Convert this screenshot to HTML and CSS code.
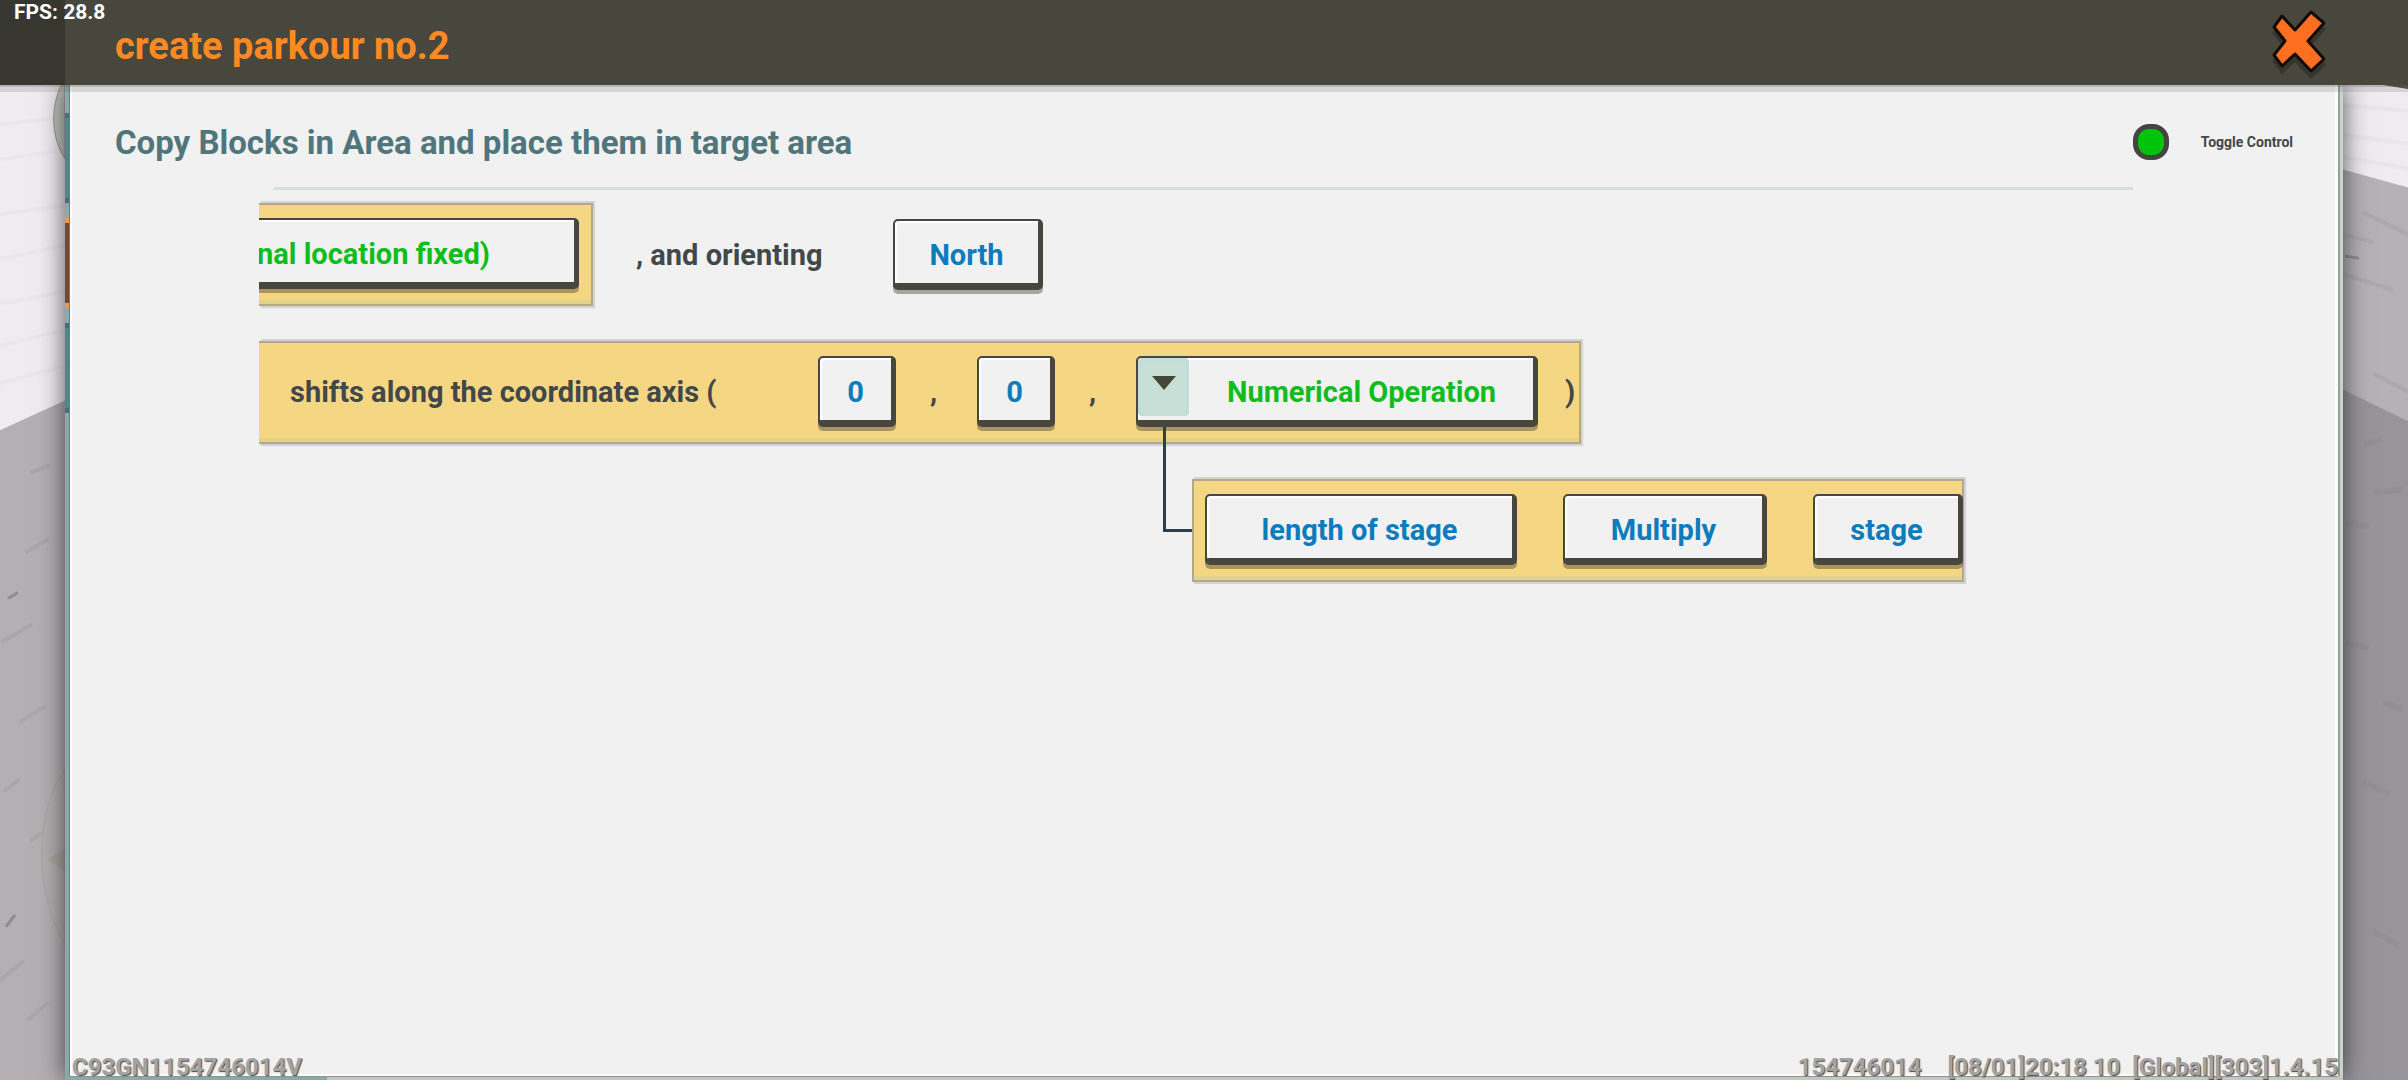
FILE: index.html
```
<!DOCTYPE html>
<html lang="en">
<head>
<meta charset="utf-8">
<title>create parkour no.2</title>
<link rel="stylesheet" href="styles.css">
</head>
<body>
<div class="screen">
  <svg class="scene scene-left" viewBox="0 0 65 1000" preserveAspectRatio="none" aria-hidden="true">
    <rect width="65" height="1000" fill="#b3afb3"/>
    <path d="M0 0H65V317L0 347Z" fill="#efecf1"/>
    <path d="M0 40l65-8M0 75l65-10M0 130l65-9M0 175l65-14M0 220l65-12M0 262l65-16M0 300l65-18" stroke="#e9e7ec" stroke-width="4"/>
    <path d="M30 390l20-8M25 470l24-14M2 560l30-18M20 640l26-16M4 710l16-12M30 760l20-14M0 900l24-20M28 940l20-18" stroke="#aaa6aa" stroke-width="4"/>
    <path d="M8 516l10-6M6 846l9-12" stroke="#8f8c90" stroke-width="3"/>
    <path d="M65 -6C50 16 50 52 65 74Z" fill="#c2c5bc" stroke="#96959a"/>
    <path d="M65 688C34 730 34 810 65 864Z" fill="#b1aeaf" stroke="#a7a5a6"/>
    <path d="M65 768L47 778L65 790Z" fill="#a8a69d"/>
  </svg>
  <svg class="scene scene-right" viewBox="0 0 65 1000" preserveAspectRatio="none" aria-hidden="true">
    <rect width="65" height="1000" fill="#98959a"/>
    <path d="M0 0H65V338L0 306Z" fill="#b5b1b5"/>
    <path d="M0 0H65V103L0 85Z" fill="#efecf1"/>
    <path d="M0 20l65 6M0 50l65 9M0 72l65 12" stroke="#e8e6ea" stroke-width="4"/>
    <path d="M20 128l45 22M0 150l30 8M0 190l50 16M30 290l35 18" stroke="#aca9ac" stroke-width="4"/>
    <path d="M2 172l14 2" stroke="#8f8c90" stroke-width="3"/>
    <path d="M20 362l18-6M4 440l22 4M30 410l30-4M2 560l24 6M40 620l20 8M20 700l26 12M30 850l24 14" stroke="#929094" stroke-width="6"/>
    <path d="M40 0H65V4Z" fill="#55544e"/>
  </svg>

  <header class="titlebar">
    <span class="fps">FPS: 28.8</span>
    <h1 class="title">create parkour no.2</h1>
    <button class="close" type="button" aria-label="Close">
      <svg viewBox="0 0 54 68" aria-hidden="true">
        <path d="M10 11L23 25L39 7L52 18L36 36L52 54L39 66L23 49L10 61L2 50L13 36L2 22Z" transform="translate(0 5)" fill="#2f2e28" stroke="#2f2e28" stroke-width="3" opacity=".7"/>
        <path d="M10 11L23 25L39 7L52 18L36 36L52 54L39 66L23 49L10 61L2 50L13 36L2 22Z" transform="translate(0 -1)" fill="#ff6f22" stroke="#120c06" stroke-width="3" stroke-linejoin="round"/>
      </svg>
    </button>
  </header>

  <main class="stage">
    <div class="rail" aria-hidden="true">
      <span class="tab"></span>
      <span class="tab tab-active"></span>
      <span class="tab"></span>
    </div>
    <section class="panel">
      <div class="panel-head">
        <h2 class="heading">Copy Blocks in Area and place them in target area</h2>
        <input class="toggle" id="toggle" type="checkbox" checked>
        <label class="toggle-label" for="toggle">Toggle Control</label>
      </div>
      <hr class="rule">
      <div class="code">
        <div class="row">
          <div class="group group-open group-fixed">
            <button class="key key-cut key-green" type="button">nal location fixed)</button>
          </div>
          <span class="word word-orient">, and orienting</span>
          <button class="key key-word" type="button">North</button>
        </div>
        <div class="row">
          <div class="group group-open group-shift">
            <span class="word word-shift">shifts along the coordinate axis (</span>
            <button class="key key-digit" type="button">0</button>
            <span class="word comma">,</span>
            <button class="key key-digit" type="button">0</button>
            <span class="word comma">,</span>
            <button class="key key-op key-green" type="button">
              <span class="drop"><svg viewBox="0 0 24 14" aria-hidden="true"><path d="M0 0H24L12 14Z" fill="#45453a"/></svg></span>
              <span class="op-label">Numerical Operation</span>
            </button>
            <span class="word">)</span>
          </div>
        </div>
        <div class="row row-child">
          <span class="branch" aria-hidden="true"></span>
          <div class="group group-child">
            <button class="key key-length" type="button">length of stage</button>
            <button class="key key-multiply" type="button">Multiply</button>
            <button class="key key-word" type="button">stage</button>
          </div>
        </div>
      </div>
    </section>
  </main>

  <footer class="status">
    <span>C93GN1154746014V</span>
    <span class="status-right"><span>154746014</span><span>[08/01]20:18 10&nbsp; [Global][303]1.4.15</span></span>
  </footer>
</div>
</body>
</html>
```
FILE: styles.css
```
* { box-sizing: border-box; }

body {
  margin: 0;
  font-family: Roboto, "Liberation Sans", sans-serif;
  font-weight: 700;
  color: #42474a;
}

h1, h2 { margin: 0; font-weight: 700; }

button { font: inherit; cursor: pointer; }

.screen {
  position: relative;
  display: flex;
  flex-direction: column;
  min-height: 100vh;
  overflow: hidden;
}

/* game world behind the panel */
.scene {
  position: absolute;
  top: 85px;
  width: 65px;
  height: calc(100% - 85px);
}
.scene-left { left: 0; }
.scene-right { right: 0; }

/* title bar */
.titlebar {
  position: relative;
  z-index: 1;
  display: flex;
  align-items: center;
  justify-content: space-between;
  height: 85px;
  padding: 0 82px 0 115px;
  background: linear-gradient(90deg, #37362f 65px, #48473d 65px);
  box-shadow: 0 2px 0 rgba(60, 60, 60, .2), 0 7px 0 rgba(60, 60, 60, .14);
}
.title {
  padding-top: 6px;
  font-size: 38px;
  line-height: 40px;
  color: #ff8a24;
}
.fps {
  position: absolute;
  top: 0;
  left: 14px;
  font-size: 21px;
  line-height: 24px;
  color: #fff;
}
.close {
  padding: 0 0 6px;
  border: 0;
  background: none;
}
.close svg {
  display: block;
  width: 54px;
  height: 76px;
  overflow: visible;
}

/* panel */
.stage {
  position: relative;
  flex: 1;
  display: flex;
  margin: 0 65px;
  padding-bottom: 4px;
  background: linear-gradient(90deg, #8ba9a8 262px, #c2c9c0 262px);
  box-shadow: 0 0 24px rgba(30, 30, 30, .75);
}
.rail {
  display: flex;
  flex-direction: column;
  gap: 15px;
  width: 5px;
  padding-top: 28px;
  background: #8ba9a8;
  border-right: 1px solid #66807f;
}
.tab {
  height: 90px;
  background: #52868d;
  border: solid #4f6c7c;
  border-width: 5px 0;
}
.tab-active {
  background: #74492f;
  border-color: #f09a42;
}
.panel {
  flex: 1;
  min-width: 0;
  margin-right: 5px;
  background: #f1f1f1;
  border: 2px solid #fcfcfc;
  border-top: 0;
  border-right-width: 3px;
  box-shadow: 0 1px 0 #8b958f, 2px 0 0 #93a297, 5px 0 0 #c9d5ca;
}
.panel-head {
  display: flex;
  align-items: center;
  height: 102px;
  padding: 12px 42px 0 43px;
}
.heading {
  flex: 1;
  padding-top: 1px;
  font-size: 33px;
  line-height: 40px;
  color: #50757b;
}
.toggle {
  appearance: none;
  width: 36px;
  height: 36px;
  margin: 0 32px 0 0;
  border: 5px solid #434541;
  border-radius: 16px;
  background: #00c40c;
}
.toggle-label {
  font-size: 14px;
  line-height: 16px;
}
.rule {
  height: 3px;
  margin: 0 202px;
  border: 0;
  background: #d5e0d7;
}

/* code rows, scrolled sideways */
.code {
  display: flex;
  flex-direction: column;
  gap: 35px;
  margin: 11px 368px 0 187px;
  padding: 2px 0 8px;
  overflow: hidden;
  font-size: 29px;
  line-height: 32px;
  white-space: nowrap;
}
.row {
  display: flex;
  align-items: center;
}
.group {
  display: flex;
  align-items: flex-start;
  height: 103px;
  padding: 13px 11px 0;
  background: #f5d682;
  border: 2px solid #b3a987;
  box-shadow: inset 0 -4px 0 #e3d388, 2px -2px 0 #d3d3d3, 2px 2px 1px #d3d3d3;
}
.group-open { border-left: 0; }
.key {
  flex: none;
  height: 71px;
  padding: 6px 0 0;
  text-align: center;
  color: #0c7cbd;
  background: #f1f1f1;
  border: solid #48473d;
  border-width: 2px 5px 7px 2px;
  border-radius: 5px;
  box-shadow: 0 4px 0 rgba(70, 60, 40, .42), inset 2px 2px 1px #fff;
}
.key-green { color: #0fbd1c; }
.key-word { width: 150px; }
.key-digit { width: 78px; }
.key-length { width: 312px; }
.key-multiply { width: 204px; }
.group-fixed {
  justify-content: flex-end;
  width: 334px;
  padding-right: 12px;
}
.key-cut {
  width: 322px;
  padding-right: 86px;
  text-align: right;
  border-left: 0;
  border-radius: 0 5px 5px 0;
}
.word-orient {
  width: 300px;
  padding-left: 43px;
}
.group-shift {
  align-items: center;
  width: 1322px;
  padding: 0 3px 3px 31px;
}
.group-shift .word { padding-top: 2px; }
.word-shift { width: 528px; }
.comma {
  width: 81px;
  padding-left: 34px;
}
.key-op {
  display: flex;
  align-items: center;
  width: 402px;
  padding: 0;
  margin-right: 27px;
}
.drop {
  align-self: flex-start;
  display: flex;
  justify-content: center;
  width: 51px;
  height: 58px;
  padding-top: 15px;
  background: #c8dfd8;
  border: 3px solid #c3dcdd;
  border-radius: 4px;
}
.drop svg {
  width: 24px;
  height: 14px;
}
.op-label { padding: 6px 0 0 38px; }
.row-child {
  position: relative;
  padding-left: 933px;
}
.group-child {
  gap: 46px;
  width: 772px;
}
.branch {
  position: absolute;
  left: 904px;
  top: -52px;
  width: 29px;
  height: 105px;
  border: solid #2d3f4d;
  border-width: 0 0 3px 3px;
}

/* build info over the bottom edge */
.status {
  position: absolute;
  left: 72px;
  right: 70px;
  bottom: 0;
  display: flex;
  justify-content: space-between;
  font-size: 24px;
  line-height: 26px;
  color: #a3a3a3;
  text-shadow: 1px 1px 1px #4a4a4a;
}
.status-right { display: flex; gap: 26px; }
```
